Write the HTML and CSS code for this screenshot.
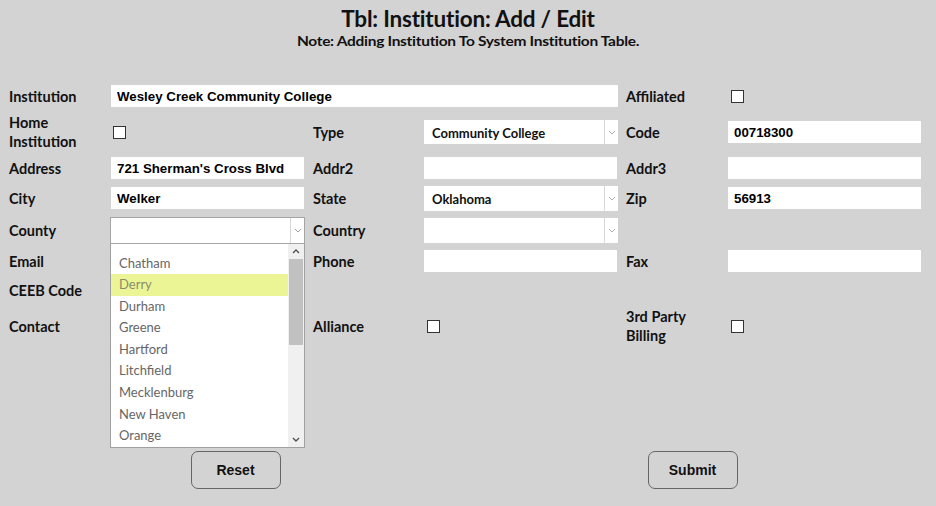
FILE: index.html
```html
<!DOCTYPE html>
<html>
<head>
<meta charset="utf-8">
<link rel="stylesheet" href="styles.css">
</head>
<body>
<div class="page">
  <header class="head">
    <h1 class="title">Tbl: Institution: Add / Edit</h1>
    <p class="note">Note: Adding Institution To System Institution Table.</p>
  </header>

  <div class="form">
    <!-- row 1 -->
    <div class="lbl">Institution</div>
    <div class="cell span3"><input class="field wide" value="Wesley Creek Community College"></div>
    <div class="lbl l3">Affiliated</div>
    <div class="cell"><span class="check cb-aff"></span></div>

    <!-- row 2 -->
    <div class="lbl two">Home<br>Institution</div>
    <div class="cell"><span class="check cb-home"></span></div>
    <div class="lbl l2">Type</div>
    <div class="cell"><div class="select"><span class="sv">Community College</span><span class="sa"><svg width="8" height="5" viewBox="0 0 8 5"><path d="M1 1l3 3 3-3" fill="none" stroke="#b0b0b0" stroke-width="1"/></svg></span></div></div>
    <div class="lbl l3">Code</div>
    <div class="cell"><input class="field" value="00718300"></div>

    <!-- row 3 -->
    <div class="lbl">Address</div>
    <div class="cell"><input class="field" value="721 Sherman's Cross Blvd"></div>
    <div class="lbl l2">Addr2</div>
    <div class="cell"><input class="field" value=""></div>
    <div class="lbl l3">Addr3</div>
    <div class="cell"><input class="field" value=""></div>

    <!-- row 4 -->
    <div class="lbl">City</div>
    <div class="cell"><input class="field" value="Welker"></div>
    <div class="lbl l2">State</div>
    <div class="cell"><div class="select tall"><span class="sv">Oklahoma</span><span class="sa"><svg width="8" height="5" viewBox="0 0 8 5"><path d="M1 1l3 3 3-3" fill="none" stroke="#b0b0b0" stroke-width="1"/></svg></span></div></div>
    <div class="lbl l3">Zip</div>
    <div class="cell"><input class="field" value="56913"></div>

    <!-- row 5 -->
    <div class="lbl">County</div>
    <div class="cell">
      <div class="combo">
        <div class="select open"><span class="sv"></span><span class="sa"><svg width="8" height="5" viewBox="0 0 8 5"><path d="M1 1l3 3 3-3" fill="none" stroke="#a0a0a0" stroke-width="1"/></svg></span></div>
        <div class="dropdown">
          <ul class="opts">
            <li>Chatham</li>
            <li class="hl">Derry</li>
            <li>Durham</li>
            <li>Greene</li>
            <li>Hartford</li>
            <li>Litchfield</li>
            <li>Mecklenburg</li>
            <li>New Haven</li>
            <li>Orange</li>
          </ul>
          <div class="sbar">
            <div class="sb-btn"><svg width="8" height="5" viewBox="0 0 8 5"><path d="M1 4l3-3 3 3" fill="none" stroke="#505050" stroke-width="1.4"/></svg></div>
            <div class="sb-track"><div class="sb-thumb"></div></div>
            <div class="sb-btn"><svg width="8" height="5" viewBox="0 0 8 5"><path d="M1 1l3 3 3-3" fill="none" stroke="#505050" stroke-width="1.4"/></svg></div>
          </div>
        </div>
      </div>
    </div>
    <div class="lbl l2">Country</div>
    <div class="cell"><div class="select tall"><span class="sv"></span><span class="sa"><svg width="8" height="5" viewBox="0 0 8 5"><path d="M1 1l3 3 3-3" fill="none" stroke="#b0b0b0" stroke-width="1"/></svg></span></div></div>
    <div class="lbl l3"></div>
    <div class="cell"></div>

    <!-- row 6 -->
    <div class="lbl">Email</div>
    <div class="cell"></div>
    <div class="lbl l2">Phone</div>
    <div class="cell"><input class="field" value=""></div>
    <div class="lbl l3">Fax</div>
    <div class="cell"><input class="field" value=""></div>

    <!-- row 7 -->
    <div class="lbl">CEEB Code</div>
    <div class="cell"></div>
    <div class="lbl l2"></div>
    <div class="cell"></div>
    <div class="lbl l3"></div>
    <div class="cell"></div>

    <!-- row 8 -->
    <div class="lbl">Contact</div>
    <div class="cell"></div>
    <div class="lbl l2">Alliance</div>
    <div class="cell"><span class="check cb-all"></span></div>
    <div class="lbl l3 two">3rd Party<br>Billing</div>
    <div class="cell"><span class="check cb-aff"></span></div>
  </div>

  <div class="actions">
    <button class="btn">Reset</button>
    <button class="btn">Submit</button>
  </div>
</div>
</body>
</html>
```

FILE: styles.css
```css
html, body {
  margin: 0;
  padding: 0;
  background: #d3d3d3;
}
body {
  font-family: Lato, "Open Sans", sans-serif;
  color: #111;
  width: 936px;
  height: 506px;
  overflow: hidden;
}
.page {
  display: flex;
  flex-direction: column;
}
.head {
  display: flex;
  flex-direction: column;
  align-items: center;
  padding-top: 5px;
}
.title {
  margin: 0;
  font-size: 22.5px;
  font-weight: 700;
  line-height: 27px;
  letter-spacing: -0.2px;
}
.note {
  margin: 0;
  font-size: 15.5px;
  font-weight: 700;
  line-height: 19px;
  letter-spacing: -0.3px;
  transform: scaleY(0.85);
}
.form {
  margin-top: 27px;
  padding-left: 9px;
  display: grid;
  grid-template-columns: 102px 194px 119px 194px 110px 194px;
  grid-template-rows: 36px 36px 36px 24px 40px 22px 36px 36px;
  align-items: center;
}
.lbl {
  font-size: 14.5px;
  font-weight: 700;
  line-height: 19px;
  color: #111;
}
.lbl.l2, .lbl.l3 { padding-left: 8px; }
.cell { display: flex; align-items: center; }
.span3 { grid-column: span 3; }
.field {
  box-sizing: border-box;
  width: 193px;
  height: 22px;
  border: none;
  outline: none;
  margin: 0;
  padding: 0 6px;
  background: #fff;
  font-family: "Liberation Sans", Arial, sans-serif;
  font-weight: 700;
  font-size: 13.3px;
  color: #000;
}
.field.wide { width: 507px; }
.check {
  display: block;
  box-sizing: border-box;
  width: 13px;
  height: 13px;
  background: #fff;
  border: 1px solid #333;
}
.cb-home { margin-left: 2px; margin-top: 1px; }
.cb-aff { margin-left: 3px; }
.cb-all { margin-left: 3px; }
.select {
  box-sizing: border-box;
  width: 194px;
  height: 24px;
  background: #fff;
  display: flex;
  align-items: center;
}
.select.tall { height: 25px; }
.select .sv {
  flex: 1;
  padding-left: 8px;
  padding-top: 2px;
  font-size: 13px;
  font-weight: 700;
  color: #111;
}
.select .sa {
  width: 13px;
  align-self: stretch;
  border-left: 1px solid #d8d8d8;
  display: flex;
  align-items: center;
  justify-content: center;
}
.combo {
  position: relative;
  margin-left: -1px;
}
.select.open {
  border: 1px solid #a5a5a5;
  width: 195px;
  height: 27px;
}
.dropdown {
  position: absolute;
  left: 0;
  top: 100%;
  width: 195px;
  height: 204px;
  box-sizing: border-box;
  background: #fff;
  border: 1px solid #a0a0a0;
  border-top: none;
  display: flex;
  overflow: hidden;
  z-index: 5;
}
.opts {
  list-style: none;
  margin: 0;
  padding: 9px 0 0 0;
  flex: 1;
}
.opts li {
  height: 21.6px;
  line-height: 21.6px;
  padding-left: 8px;
  font-size: 13px;
  color: #666;
}
.opts li.hl {
  background: #ebf596;
  color: #8c8c6a;
}
.sbar {
  width: 16px;
  background: #f0f0f0;
  display: flex;
  flex-direction: column;
}
.sb-btn {
  height: 15px;
  display: flex;
  align-items: center;
  justify-content: center;
}
.sb-track {
  flex: 1;
  padding: 0 1px;
}
.sb-thumb {
  height: 86px;
  background: #c1c1c1;
}
.actions {
  margin-top: 107px;
  padding-left: 7px;
  padding-right: 15px;
  display: grid;
  grid-template-columns: 1fr 1fr;
  justify-items: center;
}
.btn {
  width: 90px;
  height: 38px;
  box-sizing: border-box;
  border: 1px solid #666;
  border-radius: 7px;
  background: #d3d3d3;
  font-family: "Liberation Sans", Arial, sans-serif;
  font-weight: 700;
  font-size: 14px;
  color: #111;
  padding: 0;
}
```
